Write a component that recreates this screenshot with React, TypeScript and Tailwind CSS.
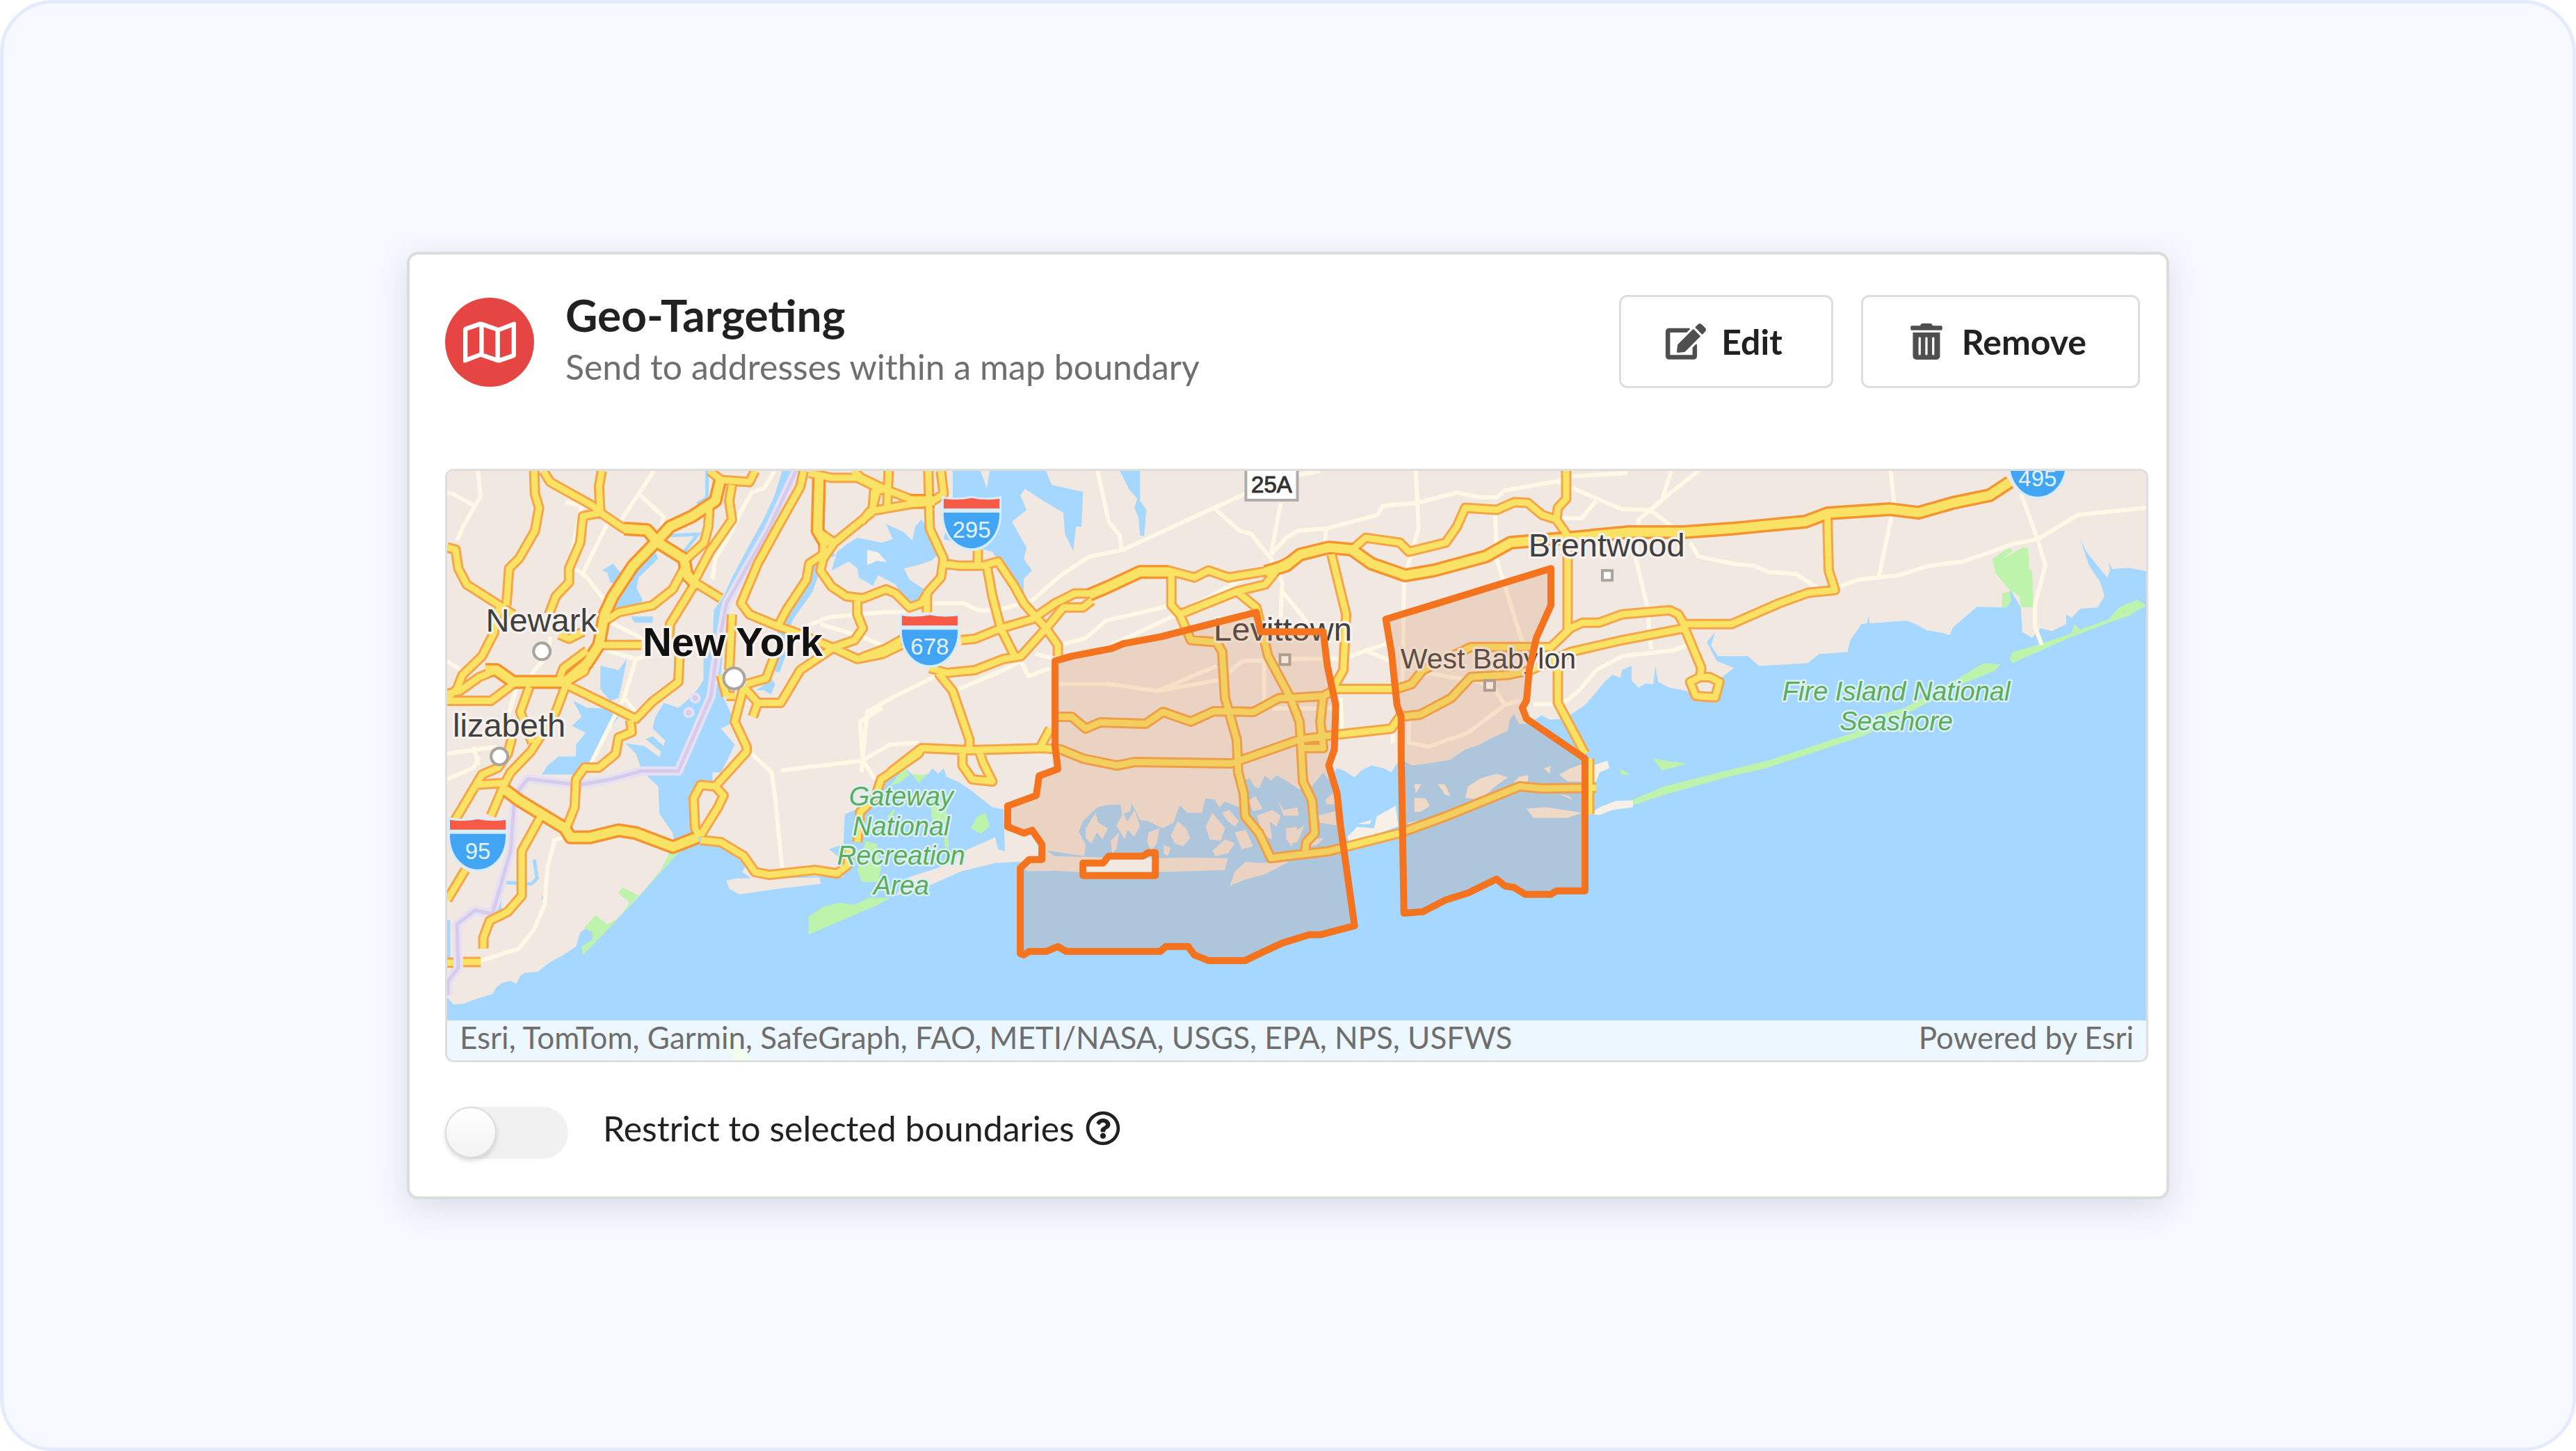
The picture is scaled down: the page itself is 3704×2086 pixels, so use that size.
import React, { useState } from 'react';
import { FaEdit, FaTrashAlt, FaRegMap, FaRegQuestionCircle } from 'react-icons/fa';

// Map geometry, all in the units of the map's viewBox
const WATER = [
  // ocean, harbor and south shore bays
  'M645 1433L654 1443L669 1442L687 1435L710 1428L716 1418L724 1412L736 1409L744 1413L750 1402L756 1398L775 1396L793 1382L812 1372L830 1360L836 1340L842 1335L881 1328L916 1293L948 1257L979 1223L971 1213L969 1197L960 1184L950 1170L948 1130L932 1115L922 1100L916 1083L901 1068L928 1072L950 1088L952 1080L930 1062L940 1058L956 1072L958 1064L940 1047L944 1030L956 1010L977 1017L989 1007L1005 990L1013 977L1013 947L1026 923L1028 877L1042 857L1054 830L1077 787L1099 747L1115 713L1126 677L1152 677L1132 720L1079 817L1050 870L1042 923L1038 970L1042 1003L1058 1037L1038 1047L1058 1070L1050 1087L1038 1110L1026 1110L1026 1123L1007 1127L993 1180L1009 1203L1050 1213L1079 1233L1069 1253L1083 1263L1120 1258L1214 1260L1218 1240L1193 1220L1214 1213L1216 1170L1240 1160L1264 1123L1285 1115L1301 1103L1318 1117L1336 1112L1342 1104L1350 1112L1358 1104L1362 1116L1380 1124L1399 1137L1428 1160L1444 1163L1446 1223L1436 1220L1432 1203L1387 1223L1350 1247L1309 1260L1289 1287L1338 1272L1383 1252L1432 1240L1468 1238L1477 1252L1517 1251L1554 1253L1668 1253L1762 1250L1766 1233L1700 1232L1668 1233L1587 1232L1517 1230L1506 1222L1560 1230L1562 1214L1552 1195L1558 1180L1568 1170L1579 1160L1592 1157L1612 1156L1614 1170L1626 1166L1628 1154L1640 1178L1652 1180L1672 1190L1688 1182L1697 1157L1708 1168L1729 1168L1734 1147L1747 1149L1754 1160L1762 1152L1783 1160L1787 1124L1797 1118L1804 1130L1811 1133L1819 1114L1828 1122L1836 1114L1852 1123L1868 1134L1887 1130L1903 1110L1911 1120L1923 1104L1934 1108L1948 1117L1958 1107L1972 1100L1990 1104L2001 1110L2013 1090L2030 1100L2054 1097L2085 1092L2107 1077L2128 1070L2146 1060L2168 1050L2171 1034L2177 1026L2184 1040L2197 1040L2217 1028L2228 1034L2250 1033L2279 1013L2292 998L2307 980L2318 970L2330 974L2332 963L2346 957L2346 978L2356 988L2366 982L2377 983L2380 958L2384 980L2400 988L2426 993L2438 1003L2471 1003L2476 973L2493 960L2468 950L2454 923L2466 908L2460 928L2470 943L2513 943L2529 957L2566 955L2599 953L2615 940L2656 937L2660 920L2676 897L2684 896L2686 886L2688 896L2740 892L2754 897L2770 906L2790 909L2803 913L2807 902L2842 872L2880 873L2890 848L2905 873L2907 908L2921 917L2933 903L2950 907L2970 897L2970 883L2978 888L2990 875L3015 873L3025 857L3019 837L3003 813L2990 775L2999 793L3015 813L3029 830L3033 820L3031 807L3036 818L3060 816L3085 821V1522H645Z',
  // Newark bay and the Kill
  'M867 820L883 810L897 827L899 838L944 793L948 803L920 830L917 845L926 863L916 873L883 873L895 843L879 837L875 823Z',
  'M865 957L891 963L903 947L895 987L891 1003L879 1007L865 990Z',
  'M826 1007L846 1017L870 1018L891 1030L875 1053L860 1080L850 1100L838 1113H781L789 1100L805 1087H830V1070L844 1053L824 1043L838 1030Z',
  'M909 886H940V895H914Z',
  // East River
  'M1173 800L1184 810L1170 850L1142 890L1130 917L1132 940L1122 967L1114 964L1118 940L1116 915L1132 880L1158 850Z',
  'M1088 992L1100 984L1112 976L1116 984L1110 998L1100 992Z',
  // Long Island Sound
  'M1371 677H1411L1420 702L1424 677H1505L1513 697L1558 707L1556 757H1548L1544 792L1532 767L1530 737L1501 720L1475 703L1468 712L1477 733L1456 750L1477 787L1473 803L1485 820L1473 832V855L1460 843L1444 817L1428 793L1358 775L1371 720Z',
  'M1197 820L1205 793L1218 783L1234 773L1269 780L1285 775L1275 753L1301 765L1313 777L1317 757L1326 747L1358 790L1340 806L1318 813L1301 817L1309 833L1330 847L1318 870H1305L1289 840L1264 827L1256 842L1248 837L1236 830L1234 817L1222 807Z',
  'M1611 677H1640V720L1649 733L1646 770H1640L1638 745L1632 730L1636 717L1624 703Z',
];

const LAND = [
  'M1046 1265L1060 1262L1180 1261L1181 1270L1120 1277L1065 1285L1050 1277Z',
  'M1769 1273L1776 1252L1792 1238L1811 1240L1854 1238L1820 1256L1790 1264Z',
  'M1562 1190L1576 1168L1580 1182L1594 1190L1586 1206L1578 1196L1570 1212L1562 1204Z',
  'M1606 1186L1616 1168L1622 1180L1632 1164L1640 1186L1632 1202L1622 1192L1618 1206Z',
  'M1598 1208L1610 1196L1606 1220L1600 1226Z',
  'M1652 1196L1668 1190L1664 1212L1656 1222L1650 1210Z',
  'M1684 1200L1694 1180L1706 1190L1712 1204L1702 1216L1690 1212Z',
  'M1674 1214L1684 1218L1680 1230L1674 1226Z',
  'M1734 1188L1744 1168L1754 1180L1762 1190L1756 1208L1740 1206Z',
  'M1744 1222L1762 1206L1776 1212L1766 1226L1748 1230Z',
  'M1758 1168L1768 1164L1782 1180L1776 1188L1764 1178Z',
  'M1776 1196L1792 1192L1802 1216L1786 1220Z',
  'M1796 1150L1806 1144L1816 1162L1802 1166Z',
  'M1808 1172L1830 1164L1842 1172L1836 1188L1826 1180L1830 1206L1816 1200Z',
  'M1838 1150L1846 1164L1866 1160L1868 1172L1846 1172Z',
  'M1850 1190L1866 1188L1858 1216L1850 1206Z',
  'M1852 1200L1876 1186L1866 1210L1856 1212Z',
  'M1886 1206L1904 1204L1894 1214L1884 1216Z',
  'M1896 1172L1920 1166L1922 1186L1898 1182Z',
  'M1906 1150L1916 1140L1924 1156L1908 1156Z',
];

const SAND = [
  'M1248 790L1264 794L1276 808L1262 806L1248 812Z',
  'M1938 1202L1952 1188L1976 1190L1980 1173L2007 1158L2011 1187L1976 1200L1940 1212Z',
  'M1952 1184L1972 1178L1970 1184Z',
  'M2107 1147L2111 1130L2130 1118L2152 1112L2168 1117L2150 1130L2136 1143L2120 1148Z',
  'M2034 1147L2050 1147L2056 1158L2044 1166L2034 1167Z',
  'M2034 1127L2044 1127L2036 1140Z',
  'M2068 1127H2078L2086 1144L2078 1142Z',
  'M2024 1182L2060 1176L2030 1192Z',
  'M2174 1128L2184 1116L2198 1114L2196 1126Z',
  'M2195 1162L2224 1160L2275 1168L2254 1175H2205Z',
  'M2242 1113L2258 1104L2275 1098V1123H2254Z',
  'M2220 1104L2230 1101L2228 1112Z',
  'M2240 1140L2256 1144L2262 1150Z',
  'M2285 1170L2300 1160L2323 1151L2348 1150V1160L2318 1164L2300 1171Z',
  'M2287 1123L2291 1100L2311 1093L2314 1104L2300 1110L2295 1123Z',
];

const PARKS = [
  'M979 1223H965L952 1250L920 1287L897 1275L891 1283L907 1297L891 1320L875 1328L858 1315L842 1333L854 1340V1350L838 1360L840 1372L883 1328L948 1257Z',
  'M1164 1317L1185 1303L1209 1297L1230 1300L1250 1290H1281L1264 1300L1240 1310L1164 1343Z',
  'M1234 1250L1246 1208L1262 1213L1268 1247L1264 1267H1240Z',
  'M1301 1103L1309 1113L1297 1123L1281 1130Z',
  'M1312 1112L1334 1114L1322 1125Z',
  'M1276 1174L1288 1162L1284 1178Z',
  'M1338 1150H1362V1184L1366 1218H1360L1358 1190L1342 1180Z',
  'M1397 1190L1406 1174L1418 1168L1424 1187L1412 1198Z',
  'M2864 803L2876 795L2889 787L2893 792L2876 805L2907 787H2915L2917 817L2921 820L2923 872L2905 873L2903 857L2889 848L2868 823Z',
  'M2878 853L2889 850L2891 863L2885 873H2878Z',
  'M2348 1157L2348 1149L2393 1130L2484 1107L2542 1093L2664 1053L2700 1028L2738 1017L2815 975L2852 953L2876 955L2866 965L2827 980L2746 1023L2680 1057L2542 1103L2490 1115L2400 1140Z',
  'M2889 947L2893 937L2935 925L2978 910L2982 897L2990 905L3031 890L3046 873L3072 862L3085 870L3060 885L3031 895L2974 917L2893 953Z',
  'M2377 1090L2400 1094L2425 1097L2410 1102L2389 1107Z',
  'M2330 1105L2344 1113H2330Z',
  'M1040 1490L1056 1484L1080 1522H1058Z',
];

const LOCAL_ROADS = [
  'M689 677L693 713L685 727L668 757L659 777M645 708L653 710L685 727',
  'M942 677L920 710L895 747L899 770M920 710L956 743L952 763',
  'M838 727L830 767L820 813M815 722L838 727M875 753L840 823M830 818L846 830L871 863',
  'M1115 677L1100 702L1083 707L1067 735L1050 770L1030 803L1026 833',
  'M875 935L916 947L936 940M916 947L899 1003L880 1040L850 1100M899 1003L916 1024',
  'M1270 1017L1238 1037L1242 1093L1124 1107M1079 1080L1111 1110L1116 1147L1126 1247M1242 1093L1260 1120',
  'M1161 900L1193 887L1270 880L1297 880L1338 867H1387L1407 877L1436 877L1485 863L1526 827L1567 800L1616 790L1746 730L1791 710',
  'M1181 897L1240 915L1276 930M871 890L920 915L930 925',
  'M1579 677L1595 750L1611 770L1613 790M1746 730L1783 763L1799 767L1828 803L1844 837L1842 887M1842 723L1828 797',
  'M1844 850L1885 900M1828 797L1850 773L1866 763L1907 760L1981 740L1989 727L2038 723L2095 708L2128 715L2152 715L2164 705L2238 692L2258 685L2340 680M1866 683L1898 677',
  'M2036 677L2040 760L2030 793L2019 837L2017 983M2150 737L2152 803L2189 923',
  'M2238 692L2332 732L2372 733L2400 710L2442 677M2403 677L2389 720L2356 747L2352 803L2368 870L2374 933M2372 733L2405 757M2246 745H2274L2295 720',
  'M2430 780L2442 800L2490 810L2521 813L2542 822L2582 825L2613 845',
  'M2426 927L2405 935L2332 943L2295 963L2270 993L2246 1012L2205 1012',
  'M1850 947H1932L1964 935L2001 923M1964 935L2000 950M1907 762L1905 785',
  'M1522 983H1595L1665 993L1754 977L1787 950L1880 947M1665 993L1750 957M1818 950V1007',
  'M1526 927L1562 917L1591 892L1685 870M1599 927L1693 883L1779 837L1830 810M1375 992L1444 963L1469 950M1469 950L1480 972L1510 960M1490 940L1512 945',
  'M1350 970L1289 1000L1248 1023L1240 1110M1240 1093L1281 1070L1322 1067',
  'M2026 1030V1067L2054 1073L2111 1053L2164 1013L2185 1007M1928 1003L1930 1050M2003 1048V1068M2050 967L2128 980L2150 992L2164 1013M1830 1018H1925',
  'M2718 677L2723 723L2701 830M2644 843L2672 833L2729 827L2774 813L2823 807L2893 782L2929 775L2987 740L3085 730',
  'M2905 710L2929 775L2940 813L2925 870V900L2935 927',
  'M645 1120L683 1103L691 1087M814 1203L799 1207L789 1247L785 1300L770 1335L748 1363L693 1380',
  'M645 950L675 970M744 990L732 1030M645 1083L716 1073M683 1073L690 1100M793 915L790 940L765 970',
];

const HIGHWAYS = [
  'M770 677L771 710L777 730L771 763L748 803L734 817L730 870',
  'M783 677L793 693L854 727L865 737L899 760L932 762L948 780L985 803L989 830L1038 860',
  'M867 677L863 700L865 737L840 742L836 780L820 817V837L801 857L791 883',
  'M645 787L657 790L661 817L673 840L720 870L740 883M720 870L712 910L695 943L667 970L659 990L645 1003',
  'M1022 677L1038 690L1079 693L1087 677M1054 697L1050 720L1054 747L1022 793L1001 833',
  'M1022 723L1020 757L1014 780L989 803M985 817L969 847L940 870L891 880L871 893M1000 840L965 897L963 920',
  'M863 927H924M979 937L977 980L940 1008L916 1033L890 1020L814 983',
  'M806 912L820 918L840 908M846 953L842 965L820 978L806 976L812 960L846 935',
  'M716 963L691 973L663 993L645 997M645 1007H708L740 983',
  'M763 987L750 1023L767 1067M816 983L801 1023L765 1080L736 1110L728 1125L708 1172',
  'M738 1060L732 1083L718 1103L695 1113L663 1167L652 1185M683 1128L728 1125M671 1250L645 1293',
  'M908 1035L910 1052L891 1060L887 1083L863 1103L842 1103L830 1120L828 1160L816 1190',
  'M1009 1200L1034 1160L1042 1143L1030 1130L1009 1128L999 1147L1001 1190L1007 1203',
  'M1009 1207L1038 1210L1071 1230L1087 1253L1107 1257L1173 1250L1205 1255L1220 1243L1222 1220M1234 1210L1238 1167L1260 1145L1268 1120L1322 1083L1326 1075',
  'M1030 1130L1075 1080V1073L1058 1037L1071 987M1046 1000L1038 970M1054 883L1050 963M1058 1000L1046 1000',
  'M1157 677L1152 700L1120 757L1091 810L1067 867L1079 883L1120 900L1140 907L1197 930L1234 947L1270 940L1297 927',
  'M1165 680L1197 687H1234L1267 703M1179 687L1177 763L1201 780L1185 803L1181 820L1197 843L1218 857L1242 860L1275 847L1289 853L1309 873L1326 867L1336 850L1354 830L1358 803L1338 760L1336 677',
  'M1201 780L1254 737L1262 707M1185 780V797L1165 810L1161 833L1132 877L1120 900M1228 677L1240 687',
  'M1234 860V883L1242 903L1230 920L1201 930L1152 963L1136 990L1124 1010H1091L1084 1030M1071 987L1091 1010M1075 983L1103 975L1115 943',
  'M1279 677L1277 727M1240 687L1273 703L1309 717L1338 723L1358 710L1354 677M1273 703L1258 707L1256 733M1240 750L1252 735L1309 725L1338 723',
  'M1358 810L1379 813H1415L1436 807L1460 843L1473 867L1505 903L1522 927V943M1407 790V813M1420 813L1428 857L1440 903L1460 943',
  'M1383 920L1403 918L1440 903L1485 890L1518 867L1546 853L1567 853L1595 843L1640 820H1681L1718 830L1738 820L1767 830L1828 820L1880 793',
  'M1571 863L1558 873H1530L1505 903L1469 943L1444 947L1403 963L1362 967L1338 960M1334 850V880',
  'M1240 945L1275 932L1300 918',
  'M1350 967L1371 993L1395 1063V1077M1385 1078V1100L1399 1120L1428 1123L1415 1097L1409 1080M1511 1047L1497 1073',
  'M1281 1110L1326 1075L1395 1078L1501 1075L1526 1077L1558 1090L1607 1100L1632 1095L1771 1097L1868 1063L1911 1057L2001 1047L2013 1030L2042 1027L2087 1003L2115 973L2168 970L2201 963L2258 937L2332 920L2421 903',
  'M1522 1030H1542L1562 1047L1583 1038L1648 1040L1673 1023L1713 1037L1746 1022L1803 1023L1840 1003H1856L1903 1000L1923 990H2009L2030 983L2046 963L2115 930H2230L2258 903L2275 895H2299L2332 883L2401 877L2413 883L2421 897H2489L2558 867L2599 852L2638 848L2629 820L2627 740',
  'M1685 823V870L1697 883L1713 920L1750 923L1758 937L1762 1003L1779 1063L1781 1110L1789 1140L1791 1173L1811 1197L1828 1233L1850 1230L1911 1223L2013 1197L2079 1173L2185 1130L2217 1133L2295 1132',
  'M1697 883L1779 850L1820 840L1836 820M1779 850L1807 873L1824 943L1856 1003L1869 1037L1871 1067L1874 1123L1887 1150L1891 1197L1879 1210L1877 1223',
  'M1915 797L1936 883L1932 963L1915 993M1903 1000L1899 1037L1903 1075H1874',
  'M2421 900L2446 960L2444 973L2430 980L2438 1000L2466 1002L2472 980L2458 973H2444',
  'M1948 787L1964 773L2013 780L2026 793L2079 780L2095 757L2107 730L2152 733L2177 722L2197 723L2217 740L2238 747L2254 770V905M2252 677V717L2240 730L2238 747',
  'M2240 960V1010L2279 1083M2285 1090V1170',
  'M781 1170L752 1223V1287L732 1310L706 1323L697 1347V1363M645 1383H654M668 1382H693',
];

const INTERSTATES = [
  'M899 760L932 762L948 780L985 803L989 825L1000 838M1038 687L1030 720L997 742L965 757L944 780L912 813L883 857L871 883L863 927L846 953L814 980',
  'M814 980H740L716 963L700 963M728 1135L748 1150L814 1190L822 1203H850L891 1193L916 1197L969 1217L1005 1203',
  'M1179 687L1177 763L1190 785M1309 720H1345M1567 855L1595 843L1640 822H1681M1820 822L1850 813L1870 797L1911 787L1944 790L1972 810L2021 827L2062 820L2136 800L2172 780L2258 773L2340 765H2421L2490 760L2541 755L2595 750L2627 738L2717 732L2758 737L2807 723L2860 712L2889 693',
];

const BOUNDARIES = [
  'M1518 950L1542 943L1599 932L1616 925L1670 915L1807 880L1813 908H1903L1909 957L1921 1013L1919 1077L1911 1100L1923 1140L1928 1187L1948 1330L1899 1343H1883L1844 1355L1816 1368L1791 1380H1738L1718 1372L1709 1360H1677L1669 1367H1534L1522 1360L1505 1367H1481L1473 1372L1468 1370V1247L1481 1235H1499V1213L1485 1193L1473 1197L1450 1188V1158L1491 1143L1495 1115L1522 1105L1518 1073ZM1558 1258H1662V1225H1652L1644 1230H1595L1587 1240H1558Z',
  'M1993 890L2230 817V870L2209 917L2199 963L2195 1007L2189 1017L2195 1033L2279 1090V1280H2238L2230 1285H2193L2177 1275L2164 1273L2152 1263L2111 1283L2079 1293L2046 1310L2019 1312L2015 1080V1030L2009 1013L2001 937Z',
];

const STATE_LINE =
  'M1146 677L1107 760L1046 867L1030 953L1024 1000L977 1108H924L879 1120L834 1128L761 1119L742 1143L736 1223L710 1313L685 1308L659 1328L661 1390L646 1410V1430';

type ShieldProps = { x: number; y: number; route: string };

const Shield: React.FC<ShieldProps> = ({ x, y, route }) => (
  <g transform={`translate(${x} ${y})`}>
    <path d="M-43 0Q-20 5 0 0Q20 5 43 0V26C43 56 24 79 0 79S-43 56 -43 26Z" fill="#d9ecfb" />
    <path d="M-40 4Q-20 7 0 3Q20 7 40 4V18H-40Z" fill="#f85a48" />
    <path d="M-40 24H40C41 54 22 75 0 75S-41 54 -40 24Z" fill="#42a5f3" />
    <text y="60" textAnchor="middle" fontSize="33" fill="#e4f3ff">{route}</text>
  </g>
);

const BoundaryMap: React.FC = () => (
  <svg
    viewBox="645 677 2440 845"
    className="block w-full h-auto font-['Liberation_Sans',sans-serif]"
    role="img"
    aria-label="Map boundary"
  >
    <rect x="645" y="677" width="2440" height="845" fill="#f0e8e1" />
    <g fill="#a6d7ff">
      {WATER.map((d) => <path key={d} d={d} />)}
    </g>
    <path d="M1018 677V716L1004 724M965 770L1005 768L980 800M1186 770L1200 800M742 1180V1200M770 1235L774 1262L766 1270L730 1268M781 1290H785M647 1322V1380M720 1280V1310" fill="none" stroke="#a6d7ff" strokeWidth="5" />
    <g fill="#f0e8e1">
      {LAND.map((d) => <path key={d} d={d} />)}
    </g>
    <g fill="#f7f0e6">
      {SAND.map((d) => <path key={d} d={d} />)}
    </g>
    <g fill="#bef3ac">
      {PARKS.map((d) => <path key={d} d={d} />)}
    </g>

    <g fill="none" strokeLinejoin="round" strokeLinecap="butt">
      <path d={LOCAL_ROADS.join('')} stroke="#fff8e6" strokeWidth="6" />
      <path d={STATE_LINE} stroke="#e6e0f2" strokeWidth="13" />
      <path d={STATE_LINE} stroke="#d6cbeb" strokeWidth="5" />
      <path d={HIGHWAYS.join('')} stroke="#f5a548" strokeWidth="15" />
      <path d={INTERSTATES.join('')} stroke="#f59331" strokeWidth="20" />
      <path d={HIGHWAYS.join('')} stroke="#fae364" strokeWidth="9" />
      <path d={INTERSTATES.join('')} stroke="#fae364" strokeWidth="13" />
    </g>
    <g fill="#d6cbeb" stroke="#e6e0f2" strokeWidth="4">
      <circle cx="1001" cy="1003" r="6" />
      <circle cx="992" cy="1024" r="6" />
    </g>

    <Shield x={1398} y={713} route="295" />
    <Shield x={1338} y={881} route="678" />
    <Shield x={689} y={1174} route="95" />
    <Shield x={2929} y={639} route="495" />
    <rect x="1792" y="664" width="74" height="55" fill="#fff" stroke="#adadad" strokeWidth="4" />
    <text x="1829" y="708" textAnchor="middle" fontSize="33" fill="#333" stroke="#333" strokeWidth="1">25A</text>

    {/* place names */}
    <g textAnchor="middle" stroke="#f6f1ec" strokeWidth="7" strokeLinejoin="round" paintOrder="stroke" fill="#404040" fontSize="47">
      <text x="780" y="908">Newark</text>
      <text x="734" y="1059">lizabeth</text>
      <text x="1845" y="921">Levittown</text>
      <text x="2310" y="800">Brentwood</text>
      <text x="2140" y="961" fontSize="41">West Babylon</text>
      <text x="1055" y="943" fontSize="58" fontWeight="700" fill="#111">New York</text>
    </g>
    <g textAnchor="middle" stroke="#dcf0f5" strokeWidth="5" strokeLinejoin="round" paintOrder="stroke" fill="#5aae5a" fontSize="38" fontStyle="italic">
      <text x="2726" y="1007">Fire Island National</text>
      <text x="2726" y="1050">Seashore</text>
      <text x="1297" y="1157">Gateway</text>
      <text x="1297" y="1200">National</text>
      <text x="1297" y="1242">Recreation</text>
      <text x="1297" y="1285">Area</text>
    </g>

    <g fill="#fff" stroke="#a8a49f" strokeWidth="4">
      <circle cx="781" cy="936" r="12" />
      <circle cx="720" cy="1087" r="12" />
      <circle cx="1057" cy="975" r="15" />
      <rect x="1841" y="941" width="14" height="14" />
      <rect x="2304" y="820" width="14" height="14" />
      <rect x="2135" y="978" width="14" height="14" />
    </g>

    <g fill="#d3824b" fillOpacity="0.2" fillRule="evenodd" stroke="#f4731f" strokeWidth="10" strokeLinejoin="round">
      {BOUNDARIES.map((d) => <path key={d} d={d} />)}
    </g>
  </svg>
);

export default function App() {
  const [restricted, setRestricted] = useState(false);

  return (
    <div className="min-h-screen bg-white flex">
      <main className="flex-1 flex items-center justify-center rounded-[76px] border-[5px] border-[#e4ebfc] bg-[#f6f9ff] font-[Lato,sans-serif] text-[#212121]">
        <section className="w-[68.6%] rounded-2xl border-4 border-[#dcdcdd] bg-white pt-[58px] pb-[54px] pl-[51px] pr-[26px] shadow-[0_12px_48px_rgba(40,50,90,0.14)]">
          <header className="flex items-start justify-between pr-3">
            <div className="flex items-start gap-[45px]">
              <div className="mt-1 size-32 shrink-0 rounded-full bg-[#e54644] text-white flex items-center justify-center">
                <FaRegMap className="w-[76px] h-[68px]" />
              </div>
              <div>
                <h1 className="text-[64px] leading-[58px] font-bold">Geo-Targeting</h1>
                <p className="text-[50px] leading-[90px] text-[#6f6f6f]">Send to addresses within a map boundary</p>
              </div>
            </div>
            <div className="flex gap-10">
              <button type="button" className="h-[134px] pl-16 pr-[70px] flex items-center gap-[22px] rounded-xl border-[3px] border-[#dedede] bg-white text-[50px] font-bold">
                <FaEdit className="w-[58px] h-[52px] text-[#4f4f4f]" />
                Edit
              </button>
              <button type="button" className="h-[134px] pl-[68px] pr-[74px] flex items-center gap-7 rounded-xl border-[3px] border-[#dedede] bg-white text-[50px] font-bold">
                <FaTrashAlt className="w-[46px] h-[52px] text-[#4f4f4f]" />
                Remove
              </button>
            </div>
          </header>

          <div className="relative mt-[102px] overflow-hidden rounded-xl border-[3px] border-[#dedede]">
            <BoundaryMap />
            <div className="absolute inset-x-0 bottom-0 h-[57px] px-[18px] flex items-start justify-between bg-white/80 text-[44px] leading-[48px] text-[#6e6e6e]">
              <span>Esri, TomTom, Garmin, SafeGraph, FAO, METI/NASA, USGS, EPA, NPS, USFWS</span>
              <span>Powered by Esri</span>
            </div>
          </div>

          <div className="mt-16 flex items-center">
            <label className="flex items-center gap-[50px] cursor-pointer">
              <input
                type="checkbox"
                role="switch"
                className="peer sr-only"
                checked={restricted}
                onChange={(e) => setRestricted(e.target.checked)}
              />
              <span className="w-[177px] h-[75px] flex items-center rounded-full bg-[#f1f1f1] peer-checked:bg-[#2185d0] peer-checked:justify-end">
                <span className="size-[74px] rounded-full border-2 border-[#dcdcdc] bg-linear-to-b from-white to-[#f2f2f2] shadow-[0_4px_6px_rgba(0,0,0,0.14)]" />
              </span>
              <span className="pb-3 text-[50px] leading-[60px]">Restrict to selected boundaries</span>
            </label>
            <FaRegQuestionCircle className="mb-3 ml-4 size-[50px]" />
          </div>
        </section>
      </main>
    </div>
  );
}
